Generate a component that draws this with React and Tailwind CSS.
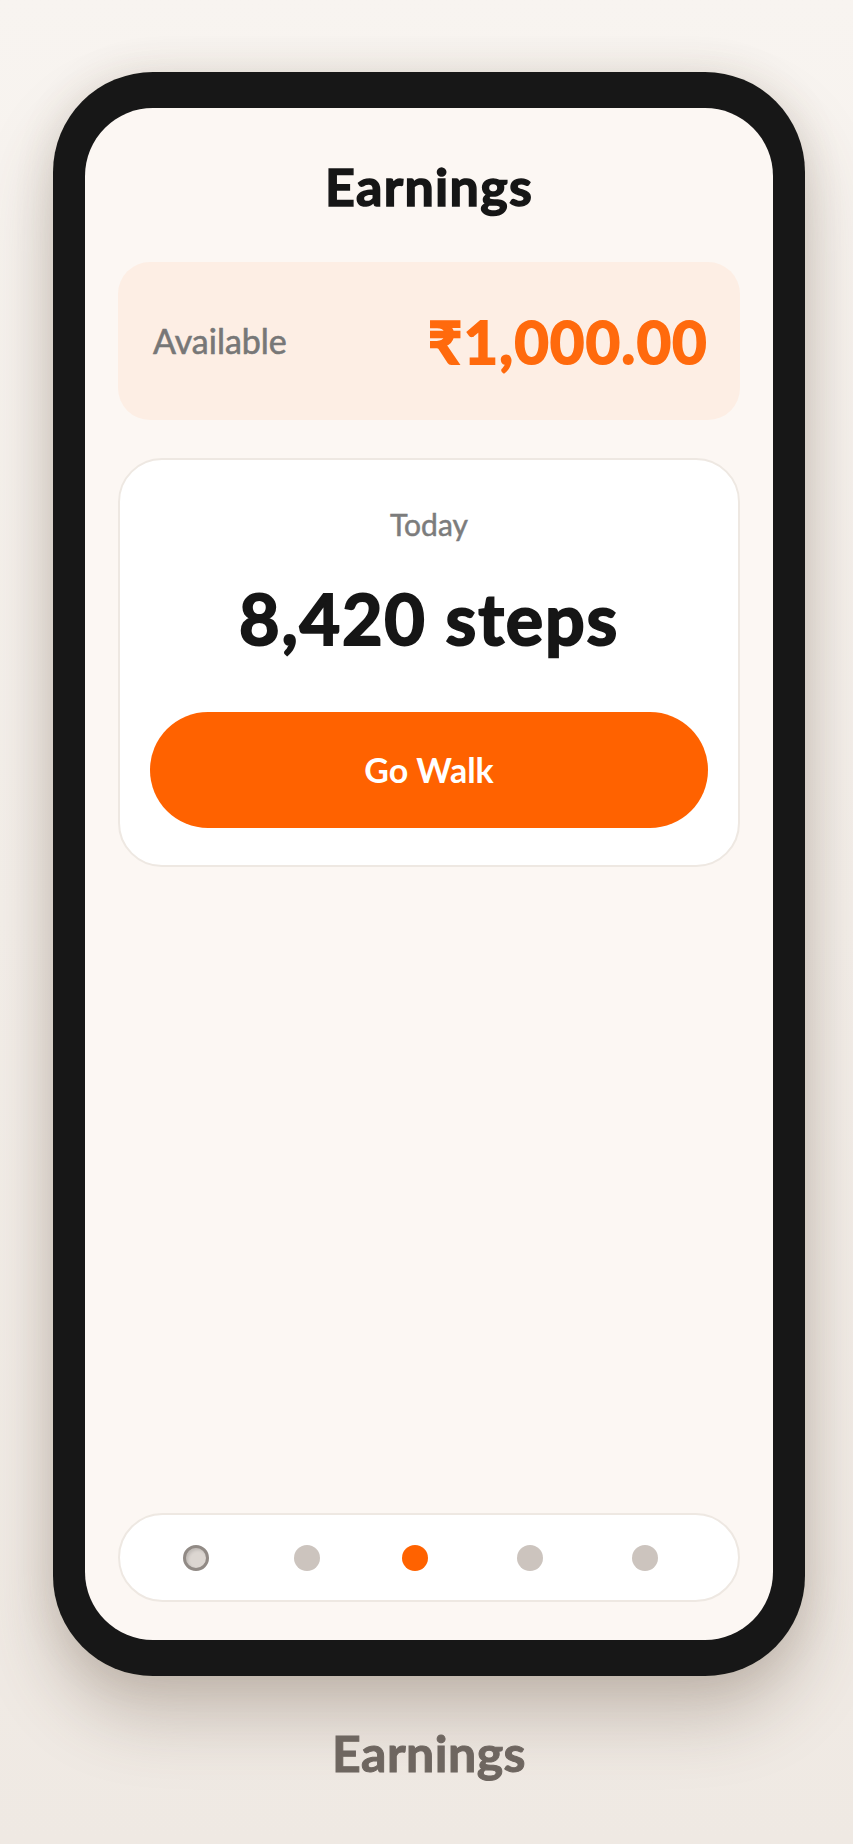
import React from 'react'

const font = { fontFamily: 'Lato, "Noto Sans", "DejaVu Sans", sans-serif' }

const NavDot = ({ state, className = '' }) => {
  if (state === 'active') {
    return <span className={`block w-[26px] h-[26px] rounded-full bg-[#ff6200] ${className}`} />
  }
  if (state === 'home') {
    return (
      <span className={`block w-[26px] h-[26px] rounded-full bg-[#dcd6d1] border-[3px] border-[#918a85] shadow-[inset_2px_2px_3px_rgba(0,0,0,0.12)] ${className}`} />
    )
  }
  return <span className={`block w-[26px] h-[26px] rounded-full bg-[#ccc4be] ${className}`} />
}

const App = () => {
  return (
    <div
      className="min-h-[1844px] w-full bg-gradient-to-b from-[#f8f4f0] via-[#f4efea] to-[#efe9e3]"
      style={font}
    >
      <div className="flex flex-col items-center pt-[72px] pl-[5px]">
        {/* Phone frame */}
        <div className="w-[752px] h-[1604px] rounded-[100px] bg-[#171717] px-[32px] py-[36px] shadow-[0_40px_70px_rgba(90,70,50,0.28),0_0_40px_rgba(90,70,50,0.12)]">
          <div className="flex flex-col h-full rounded-[68px] bg-[#fcf7f3] px-[33px] pt-[52px] pb-[38px]">
            <h1 className="text-center text-[52px] leading-none font-bold tracking-[1.3px] [-webkit-text-stroke:1.5px_#161616] text-[#161616]">
              Earnings
            </h1>

            {/* Balance */}
            <div className="mt-[50px] h-[158px] rounded-[32px] bg-[#fdeee4] flex items-center justify-between pl-[35px] pr-[32px]">
              <span className="text-[34px] leading-none text-[#777777] [-webkit-text-stroke:0.6px_#777777]">Available</span>
              <span className="text-[59px] leading-none font-bold tracking-[1.4px] [-webkit-text-stroke:2px_#ff6a0d] text-[#ff6a0d]">₹1,000.00</span>
            </div>

            {/* Today */}
            <div className="mt-[38px] rounded-[44px] bg-white border-2 border-[#eee8e2] px-[30px] pt-[49px] pb-[37px] flex flex-col items-center">
              <p className="text-[30px] leading-none text-[#7c7c7c] [-webkit-text-stroke:0.5px_#7c7c7c]">Today</p>
              <p className="mt-[44px] text-[70px] leading-none font-bold tracking-[1.8px] [-webkit-text-stroke:2px_#161616] text-[#161616]">8,420 steps</p>
              <button className="mt-[59px] w-full h-[116px] rounded-full bg-[#ff6200] text-white text-[34px] font-bold leading-none">
                Go Walk
              </button>
            </div>

            <div className="flex-1" />

            {/* Bottom nav */}
            <div className="h-[89px] rounded-full bg-white border-2 border-[#eee8e2] flex items-center pl-[63px]">
              <NavDot state="home" />
              <NavDot state="idle" className="ml-[85px]" />
              <NavDot state="active" className="ml-[82px]" />
              <NavDot state="idle" className="ml-[89px]" />
              <NavDot state="idle" className="ml-[89px]" />
            </div>
          </div>
        </div>

        <p className="mt-[52px] text-[50px] leading-none font-bold tracking-[0.5px] [-webkit-text-stroke:1px_#6e6660] text-[#6e6660]">Earnings</p>
      </div>
    </div>
  )
}

export default App
